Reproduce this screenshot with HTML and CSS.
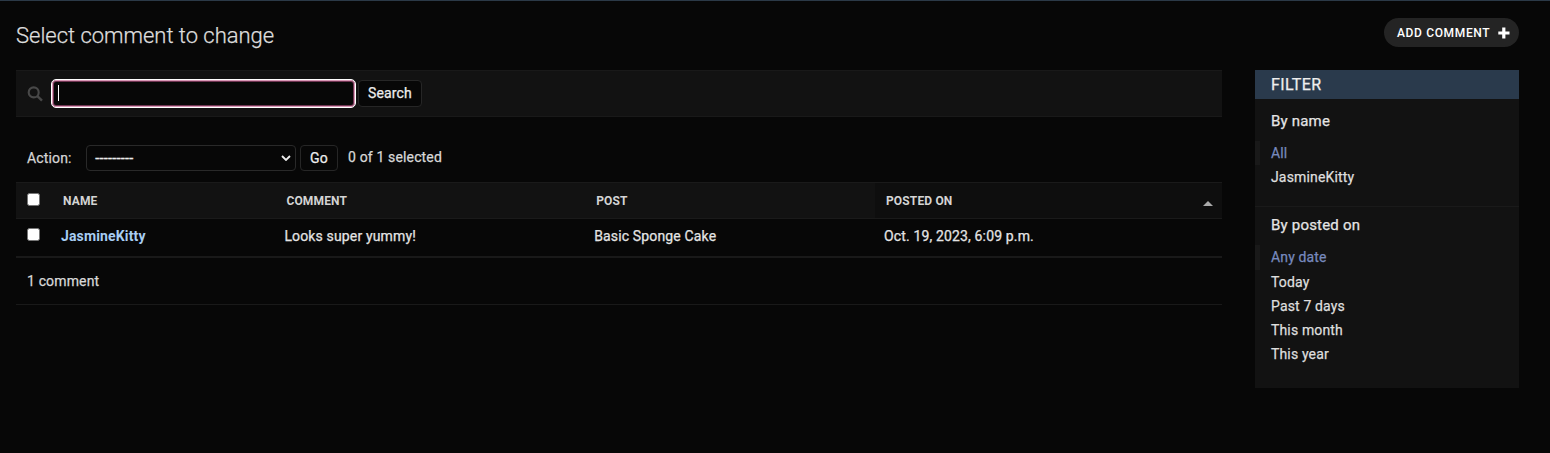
FILE: index.html
```html
<!DOCTYPE html>
<html lang="en">
<head>
<meta charset="utf-8">
<title>Select comment to change</title>
<link rel="stylesheet" href="styles.css">
</head>
<body>
<header class="page-head">
  <h1 class="title"><span>Select comment to change</span></h1>
  <a class="add-link"><span class="add-label">ADD COMMENT</span><svg class="add-icon" viewBox="0 0 12 12"><path d="M4.2 .5h3.2v3.9h4.1v3.2H7.4v3.9H4.2V7.6H.3V4.4h3.9z" fill="#fff"/></svg></a>
</header>
<main class="content">
  <section class="changelist">
    <div class="toolbar">
      <svg class="search-icon" viewBox="0 0 16 16"><circle cx="6.7" cy="6.4" r="5" fill="none" stroke="#484848" stroke-width="2.1"/><path d="M10.4 10.2l4.6 4.5" stroke="#484848" stroke-width="2.4"/></svg>
      <div class="search-input"><span class="caret"></span></div>
      <button class="button search-button"><span>Search</span></button>
    </div>
    <div class="actions">
      <span class="action-label">Action:</span>
      <div class="select"><span class="select-text">---------</span><svg class="chevron" viewBox="0 0 10 6"><path d="M1 1l4 4 4-4" fill="none" stroke="#eee" stroke-width="1.8"/></svg></div>
      <button class="button go-button"><span>Go</span></button>
      <span class="counter">0 of 1 selected</span>
    </div>
    <div class="grid-row head-row">
      <div class="cell check"><i class="box"></i></div>
      <div class="cell"><span>NAME</span></div>
      <div class="cell"><span>COMMENT</span></div>
      <div class="cell"><span>POST</span></div>
      <div class="cell sorted"><span>POSTED ON</span><svg class="sort-icon" viewBox="0 0 10 5"><path d="M0 5L5 0l5 5z" fill="#aaa"/></svg></div>
    </div>
    <div class="grid-row data-row">
      <div class="cell check"><i class="box"></i></div>
      <div class="cell"><a class="row-link">JasmineKitty</a></div>
      <div class="cell"><span>Looks super yummy!</span></div>
      <div class="cell"><span>Basic Sponge Cake</span></div>
      <div class="cell"><span>Oct. 19, 2023, 6:09 p.m.</span></div>
    </div>
    <div class="paginator"><span>1 comment</span></div>
  </section>
  <aside class="filter">
    <h2 class="filter-title"><span>FILTER</span></h2>
    <section class="group name-group">
      <h3 class="group-title"><span>By name</span></h3>
      <div class="option selected"><span>All</span></div>
      <div class="option"><span>JasmineKitty</span></div>
    </section>
    <section class="group date-group">
      <h3 class="group-title"><span>By posted on</span></h3>
      <div class="option selected"><span>Any date</span></div>
      <div class="option"><span>Today</span></div>
      <div class="option"><span>Past 7 days</span></div>
      <div class="option"><span>This month</span></div>
      <div class="option"><span>This year</span></div>
    </section>
  </aside>
</main>
</body>
</html>
```
FILE: styles.css
```css
* { box-sizing: border-box; }
body {
  margin: 0;
  height: 453px;
  overflow: hidden;
  background: #070707;
  border-top: 1px solid #2b3947;
  font-family: Roboto, sans-serif;
  font-size: 14px;
  letter-spacing: .15px;
  -webkit-text-stroke: .25px;
  color: #e4e4e4;
}
.page-head {
  display: flex;
  justify-content: space-between;
  align-items: flex-start;
  height: 69px;
  padding: 17px 31px 0 16px;
}
.title {
  margin: 4px 0 0;
  font-size: 22px;
  line-height: 28px;
  font-weight: 300;
  letter-spacing: -.02px;
  color: #dedede;
}
.add-link {
  display: flex;
  align-items: center;
  width: 135px;
  height: 29px;
  padding-left: 13px;
  border-radius: 15px;
  background: #242424;
  color: #fff;
  font-size: 12px;
  font-weight: 500;
  letter-spacing: .65px;
  -webkit-text-stroke: 0;
}
.add-label { width: 101px; white-space: nowrap; }
.add-icon { width: 12px; height: 12px; }
.content { display: flex; gap: 33px; padding-left: 16px; align-items: flex-start; }
.changelist { width: 1206px; }
.toolbar {
  display: flex;
  align-items: center;
  height: 47px;
  padding-left: 11px;
  background: #121212;
  border: solid #191919;
  border-width: 1px 0;
}
.search-icon { width: 16px; height: 16px; margin-right: 8px; }
.search-input {
  width: 305px;
  height: 29px;
  margin-right: 2px;
  padding: 5px 0 0 6px;
  border: 1px solid #fff;
  border-radius: 5px;
  background: #070707;
  box-shadow: inset 0 0 0 1px #d997b6, inset 0 0 0 2px #6e3450;
}
.caret { display: block; width: 1px; height: 16px; background: #fff; }
.button {
  display: flex;
  align-items: center;
  justify-content: center;
  margin: 0;
  padding: 0;
  border: 1px solid #262626;
  border-radius: 4px;
  background: #070707;
  color: #eee;
  font: 14px Roboto, sans-serif;
  letter-spacing: .15px;
}
.search-button { width: 64px; height: 27px; padding-bottom: 2px; }
.actions { display: flex; align-items: center; height: 65px; padding: 17px 0 0 11px; }
.action-label { width: 59px; color: #d4d4d4; }
.select {
  display: flex;
  align-items: center;
  justify-content: space-between;
  width: 210px;
  height: 26px;
  padding: 0 4px 0 8px;
  margin-right: 4px;
  border: 1px solid #292929;
  border-radius: 4px;
}
.select-text {
  padding-bottom: 2px;
  font-family: "Liberation Sans", sans-serif;
  font-size: 13.33px;
  letter-spacing: -.2px;
  -webkit-text-stroke: .5px;
  color: #eee;
}
.chevron { width: 10px; height: 6px; }
.go-button { width: 38px; height: 26px; margin-right: 10px; }
.counter { padding-bottom: 2px; color: #d8d8d8; }
.grid-row { display: grid; grid-template-columns: 36px 223.4px 309.8px 289.8px 347px; }
.cell { display: flex; align-items: center; }
.check { padding-left: 11px; }
.box {
  width: 13px;
  height: 13px;
  background: #fff;
  border: 1px solid #767676;
  border-radius: 2.5px;
}
.head-row {
  height: 37px;
  background: #121212;
  border: solid #1a1a1a;
  border-width: 1px 0;
  font-size: 12px;
  font-weight: 700;
  -webkit-text-stroke: 0;
  color: #d4d4d4;
}
.head-row .check { padding-bottom: 2px; }
.head-row .cell:not(.check) { padding-left: 11px; }
.sorted { justify-content: space-between; padding-right: 9px; background: #0e0e0e; }
.sort-icon { width: 10px; height: 5px; margin-top: 5px; }
.data-row { height: 39px; border-bottom: 2px solid #191919; }
.data-row .cell:not(.check) { padding: 0 0 3px 9px; }
.data-row .check { padding-bottom: 7px; }
.row-link { color: #a7cdf3; font-weight: 700; -webkit-text-stroke: 0; }
.paginator {
  display: flex;
  align-items: center;
  height: 47px;
  padding-left: 11px;
  border-bottom: 1px solid #191919;
  color: #d8d8d8;
}
.filter { width: 264px; height: 318px; background: #121212; }
.filter-title {
  display: flex;
  align-items: center;
  height: 29px;
  margin: 0;
  padding-left: 16px;
  background: #2a3a4c;
  font-size: 16px;
  font-weight: 400;
  letter-spacing: .4px;
  color: #eee;
}
.group-title { margin: 0 0 10px; padding-left: 16px; font-size: 15px; line-height: 20px; font-weight: 400; letter-spacing: .2px; }
.name-group { height: 108px; padding-top: 12px; border-bottom: 1px solid #1a1a1a; }
.date-group { padding-top: 8px; }
.option { height: 24px; padding-left: 16px; line-height: 24px; color: #dedede; }
.option.selected { padding-left: 11px; border-left: 5px solid #191919; color: #7789bd; }
.date-group .selected { height: 25px; }
```
